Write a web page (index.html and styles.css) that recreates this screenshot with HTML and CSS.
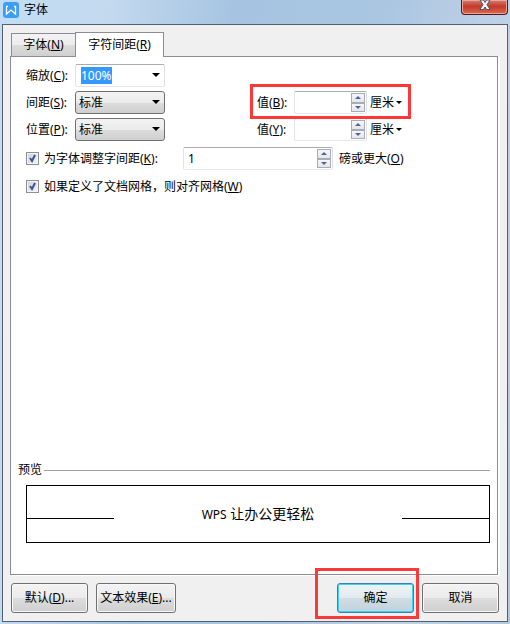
FILE: index.html
```html
<!DOCTYPE html>
<html lang="zh-CN">
<head>
    <meta charset="UTF-8">
    <meta name="viewport" content="width=device-width, initial-scale=1.0">
    <title>字体</title>
    <link rel="stylesheet" href="styles.css">
</head>
<body>
<div class="window">
    <!-- Title bar -->
    <header class="titlebar">
        <svg class="logo" viewBox="0 0 16 16" width="16" height="16" aria-hidden="true">
            <rect width="16" height="16" rx="3" fill="#3d9df6"/>
            <path d="M5 4.500H3.500V12L8 8l4.500 4V4.500H11" fill="none" stroke="#fff" stroke-width="1.300"/>
        </svg>
        <span class="title">字体</span>
        <button type="button" class="close" aria-label="关闭">
            <svg viewBox="0 0 12 12" width="12" height="12" aria-hidden="true">
                <path d="M1 0h3.500L6 2.500 7.500 0H11L8 4.700 11.200 9.500H7.500L6 7 4.500 9.500H.8L4 4.700z" fill="#f4f4f6" stroke="#53505f"/>
            </svg>
        </button>
    </header>

    <form class="client">
        <!-- Tabs -->
        <div class="tabs" role="tablist">
            <button type="button" class="tab" role="tab">字体(<u>N</u>)</button>
            <button type="button" class="tab active" role="tab" aria-selected="true">字符间距(<u>R</u>)</button>
        </div>

        <div class="panel" role="tabpanel">
            <div class="fields">
                <div class="row">
                    <label class="name" for="scale">缩放(<u>C</u>):</label>
                    <div class="combo editable">
                        <input type="text" id="scale" value="100%">
                    </div>
                </div>

                <div class="row">
                    <label class="name" for="spacing">间距(<u>S</u>):</label>
                    <div class="combo">
                        <select id="spacing"><option>标准</option></select>
                    </div>
                    <div class="value marked">
                        <label class="value-name" for="spacing-value">值(<u>B</u>):</label>
                        <div class="spin">
                            <input type="text" id="spacing-value">
                            <div class="arrows">
                                <button type="button" class="up" aria-label="增加"></button>
                                <button type="button" class="down" aria-label="减少"></button>
                            </div>
                        </div>
                        <button type="button" class="unit">厘米</button>
                    </div>
                </div>

                <div class="row">
                    <label class="name" for="position">位置(<u>P</u>):</label>
                    <div class="combo">
                        <select id="position"><option>标准</option></select>
                    </div>
                    <div class="value">
                        <label class="value-name" for="position-value">值(<u>Y</u>):</label>
                        <div class="spin">
                            <input type="text" id="position-value">
                            <div class="arrows">
                                <button type="button" class="up" aria-label="增加"></button>
                                <button type="button" class="down" aria-label="减少"></button>
                            </div>
                        </div>
                        <button type="button" class="unit">厘米</button>
                    </div>
                </div>

                <div class="row kerning">
                    <label class="check"><input type="checkbox" checked>为字体调整字间距(<u>K</u>):</label>
                    <div class="spin wide">
                        <input type="text" id="kerning-size" value="1">
                        <div class="arrows">
                            <button type="button" class="up" aria-label="增加"></button>
                            <button type="button" class="down" aria-label="减少"></button>
                        </div>
                    </div>
                    <label for="kerning-size">磅或更大(<u>O</u>)</label>
                </div>

                <div class="row">
                    <label class="check"><input type="checkbox" checked>如果定义了文档网格，则对齐网格(<u>W</u>)</label>
                </div>
            </div>

            <!-- Preview -->
            <section class="preview">
                <h2>预览</h2>
                <div class="sample">
                    <span class="rule"></span>
                    <span class="sample-text"><span class="latin">WPS</span> 让办公更轻松</span>
                    <span class="rule"></span>
                </div>
            </section>
        </div>

        <!-- Buttons -->
        <footer class="actions">
            <button type="button" class="btn">默认(<u>D</u>)...</button>
            <button type="button" class="btn effect">文本效果(<u>E</u>)...</button>
            <div class="confirm marked">
                <button type="submit" class="btn primary">确定</button>
            </div>
            <button type="button" class="btn">取消</button>
        </footer>
    </form>
</div>

<script>
    // Start with the scale value selected
    const scale = document.getElementById('scale');
    scale.focus();
    scale.select();
</script>
</body>
</html>
```

FILE: styles.css
```css
* {
    box-sizing: border-box;
}

body {
    margin: 0;
    color: #000;
    font: 12px/16px "Noto Sans", "Noto Sans CJK SC", sans-serif;
}

button, input, select {
    margin: 0;
    padding: 0;
    font: inherit;
    color: inherit;
}

u {
    text-underline-offset: 1px;
}

/* Window frame */
.window {
    display: flex;
    flex-direction: column;
    min-height: 100vh;
    padding: 0 2px 2px;
    background: linear-gradient(100deg, #c2def4 0%, #c3d9ee 18%, #a6c4e2 38%, #a9c5e1 60%, #bfd1e6 82%, #b2c9e0 100%);
}

.titlebar {
    display: flex;
    align-items: flex-start;
    height: 24px;
}

.logo {
    margin: 2px 5px 0 1px;
}

.title {
    margin-top: 2px;
}

.close {
    display: flex;
    justify-content: center;
    width: 47px;
    height: 15px;
    margin-left: auto;
    border: 1px solid #4b1a1d;
    border-top: 0;
    border-radius: 0 0 4px 4px;
    background: linear-gradient(#d08074, #c5392a 45%, #d9694f);
    box-shadow: inset 0 0 0 1px #e9a79b;
}

.close svg {
    flex: none;
    overflow: visible;
}

.client {
    flex: 1;
    display: flex;
    flex-direction: column;
    padding: 7px 7px 8px;
    border: 1px solid #53606e;
    background: #f0f0f0;
}

/* Tabs */
.tabs {
    display: flex;
    align-items: flex-end;
    padding-left: 1px;
}

.tab {
    width: 64px;
    height: 23px;
    border: 1px solid #8c8c96;
    border-width: 1px 0 0 1px;
    background: linear-gradient(#f3f3f3, #ececec 50%, #dcdcdc 51%, #d0d0d0);
}

.tab.active {
    z-index: 1;
    width: 89px;
    height: 25px;
    margin-bottom: -1px;
    border-width: 1px 1px 0;
    background: #fff;
}

.panel {
    flex: 1;
    display: flex;
    flex-direction: column;
    margin-right: 2px;
    padding: 7px 7px 31px;
    border: 1px solid #8c8c96;
    background: #fff;
    box-shadow: 2px 1px 0 #fff;
}

/* Fields */
.fields {
    display: flex;
    flex-direction: column;
    gap: 4px;
    padding-left: 8px;
}

.row {
    display: flex;
    align-items: center;
    height: 23px;
}

.name {
    width: 49px;
}

.combo {
    position: relative;
    width: 90px;
}

.combo input, .combo select {
    display: block;
    width: 100%;
    height: 23px;
    appearance: none;
    border: 1px solid #707070;
    border-radius: 3px;
    outline: 0;
    padding: 0 20px 0 3px;
    background: linear-gradient(#f3f3f3, #ebebeb 50%, #dddddd 51%, #cfcfcf);
}

.combo input {
    padding-left: 5px;
    border-color: #abadb3 #dbdfe6 #e3e9ef #e2e3ea;
    border-radius: 2px;
    background: #fff;
}

.combo input::selection {
    background: #3399ff;
    color: #fff;
}

.combo::after {
    content: "";
    position: absolute;
    top: 9px;
    right: 5px;
    border: 4px solid transparent;
    border-top-color: #000;
    border-bottom: 0;
    pointer-events: none;
}

.value {
    display: flex;
    align-items: center;
    margin-left: 92px;
}

.value-name {
    width: 37px;
}

.spin {
    display: flex;
    width: 73px;
    height: 23px;
    padding: 1px;
    border: 1px solid;
    border-color: #abadb3 #dbdfe6 #e3e9ef #e2e3ea;
    border-radius: 2px;
    background: #fff;
}

.spin input {
    flex: 1;
    min-width: 0;
    padding-left: 3px;
    border: 0;
    outline: 0;
    background: none;
}

.arrows {
    display: flex;
    flex-direction: column;
    width: 14px;
}

.arrows button {
    flex: 1;
    display: flex;
    align-items: center;
    justify-content: center;
    border: 1px solid #a9acb4;
    background: linear-gradient(#f6f6f6, #e6e6e6);
}

.arrows button::before {
    content: "";
    border: 3px solid transparent;
}

.arrows .up::before {
    border-top: 0;
    border-bottom-color: #4a62ad;
}

.arrows .down::before {
    border-bottom: 0;
    border-top-color: #4a62ad;
}

.unit {
    display: flex;
    align-items: center;
    gap: 2px;
    margin-left: 3px;
    border: 0;
    background: none;
}

.unit::after {
    content: "";
    border: 3px solid transparent;
    border-top-color: #000;
    border-bottom: 0;
}

.kerning {
    margin: 2px 0 1px;
}

.check {
    display: flex;
    align-items: center;
}

.kerning .check {
    width: 157px;
}

.spin.wide {
    width: 150px;
    margin-right: 6px;
}

.check input {
    width: 13px;
    height: 13px;
    margin-right: 5px;
    appearance: none;
    border: 1px solid #8e8f8f;
    background:
        url("data:image/svg+xml,%3Csvg xmlns='http://www.w3.org/2000/svg' viewBox='0 0 11 11'%3E%3Cpath d='M3 5l2 3L8 2' fill='none' stroke='%233c5399' stroke-width='2'/%3E%3C/svg%3E"),
        linear-gradient(135deg, #cbcfd5, #f6f6f6);
    box-shadow: inset 0 0 0 1px #f4f4f4;
}

/* Red frames round the controls to use */
.marked {
    position: relative;
}

.marked::after {
    content: "";
    position: absolute;
    inset: -7px -9px -5px -7px;
    border: 3px solid #fd3838;
    pointer-events: none;
}

.confirm.marked::after {
    inset: -15px -5px -6px -22px;
}

/* Preview */
.preview {
    margin-top: auto;
}

.preview h2 {
    display: flex;
    align-items: center;
    gap: 2px;
    margin: 0 0 7px;
    font-size: 12px;
    font-weight: normal;
}

.preview h2::after {
    content: "";
    flex: 1;
    border-top: 1px solid #a0a0a0;
}

.sample {
    display: flex;
    align-items: center;
    justify-content: space-between;
    height: 58px;
    margin-left: 8px;
    border: 1px solid #000;
}

.rule {
    width: 87px;
    margin-top: 8px;
    border-top: 1px solid #000;
}

.sample-text {
    font-size: 14px;
}

.latin {
    font-size: 12px;
}

/* Bottom buttons */
.actions {
    display: flex;
    gap: 8px;
    margin-top: 8px;
    padding: 0 1px;
}

.btn {
    width: 77px;
    height: 30px;
    border: 1px solid #707070;
    border-radius: 3px;
    background: linear-gradient(#f3f3f3, #ebebeb 50%, #dddddd 51%, #cfcfcf);
    box-shadow: inset 0 0 0 1px #f8f8f8;
}

.btn.effect {
    width: 80px;
}

.btn.primary {
    border-color: #3c7fb1;
    background: linear-gradient(#eff3f5, #e2eaee 50%, #cfdde4 51%, #c0d3dd);
    box-shadow: inset 0 0 0 1px #3fd0f8;
}

.confirm {
    margin-left: auto;
}
```
